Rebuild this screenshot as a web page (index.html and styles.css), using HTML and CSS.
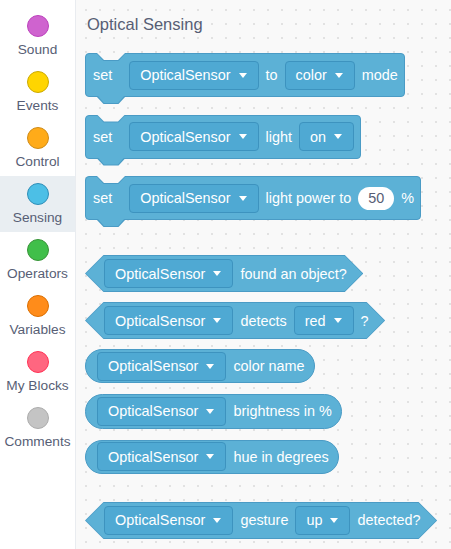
FILE: index.html
```html
<!DOCTYPE html>
<html>
<head>
<meta charset="utf-8">
<link rel="stylesheet" href="styles.css">
</head>
<body>
<div class="app">
  <nav class="sidebar">
    <div class="cat"><span class="dot sound"></span><span class="cat-label">Sound</span></div>
    <div class="cat"><span class="dot events"></span><span class="cat-label">Events</span></div>
    <div class="cat"><span class="dot control"></span><span class="cat-label">Control</span></div>
    <div class="cat active"><span class="dot sensing"></span><span class="cat-label">Sensing</span></div>
    <div class="cat"><span class="dot operators"></span><span class="cat-label">Operators</span></div>
    <div class="cat"><span class="dot variables"></span><span class="cat-label">Variables</span></div>
    <div class="cat"><span class="dot myblocks"></span><span class="cat-label">My Blocks</span></div>
    <div class="cat"><span class="dot comments"></span><span class="cat-label">Comments</span></div>
  </nav>
  <main class="workspace">
    <div class="title">Optical Sensing</div>

    <div class="stack-wrap b1">
      <div class="stack">
        <span class="lbl first">set</span>
        <span class="dd">OpticalSensor<i class="arrow"></i></span>
        <span class="lbl">to</span>
        <span class="dd">color<i class="arrow"></i></span>
        <span class="lbl">mode</span>
      </div>
    </div>

    <div class="stack-wrap b2">
      <div class="stack">
        <span class="lbl first">set</span>
        <span class="dd">OpticalSensor<i class="arrow"></i></span>
        <span class="lbl">light</span>
        <span class="dd">on<i class="arrow"></i></span>
      </div>
    </div>

    <div class="stack-wrap b3">
      <div class="stack">
        <span class="lbl first">set</span>
        <span class="dd">OpticalSensor<i class="arrow"></i></span>
        <span class="lbl">light power to</span>
        <span class="num">50</span>
        <span class="lbl">%</span>
      </div>
    </div>

    <div class="bool b4"><div class="bool-in">
      <span class="dd">OpticalSensor<i class="arrow"></i></span>
      <span class="lbl">found an object?</span>
    </div></div>

    <div class="bool b5"><div class="bool-in">
      <span class="dd">OpticalSensor<i class="arrow"></i></span>
      <span class="lbl">detects</span>
      <span class="dd">red<i class="arrow"></i></span>
      <span class="lbl">?</span>
    </div></div>

    <div class="rep b6">
      <span class="dd">OpticalSensor<i class="arrow"></i></span>
      <span class="lbl">color name</span>
    </div>

    <div class="rep b7">
      <span class="dd">OpticalSensor<i class="arrow"></i></span>
      <span class="lbl">brightness in %</span>
    </div>

    <div class="rep b8">
      <span class="dd">OpticalSensor<i class="arrow"></i></span>
      <span class="lbl">hue in degrees</span>
    </div>

    <div class="bool b9"><div class="bool-in">
      <span class="dd">OpticalSensor<i class="arrow"></i></span>
      <span class="lbl">gesture</span>
      <span class="dd">up<i class="arrow"></i></span>
      <span class="lbl">detected?</span>
    </div></div>
  </main>
</div>
</body>
</html>
```

FILE: styles.css
```css
html, body {
  margin: 0;
  padding: 0;
  width: 451px;
  height: 549px;
  overflow: hidden;
  font-family: "Liberation Sans", Arial, sans-serif;
}

.app {
  display: flex;
  width: 451px;
  height: 549px;
}

.sidebar {
  width: 75px;
  flex: none;
  background: #ffffff;
  border-right: 1px solid #e9ecf0;
  padding-top: 8px;
  box-sizing: content-box;
}

.cat {
  height: 56px;
  display: flex;
  flex-direction: column;
  align-items: center;
  padding-top: 7px;
  box-sizing: border-box;
}

.cat.active {
  background: #e9eef2;
}

.dot {
  width: 22px;
  height: 22px;
  border-radius: 50%;
  box-sizing: border-box;
  border: 1px solid rgba(0, 0, 0, 0.12);
}

.sound { background: #cf63cf; border-color: #bd42bd; }
.events { background: #ffd500; border-color: #ccaa00; }
.control { background: #ffab19; border-color: #cf8b17; }
.sensing { background: #4cbfe6; border-color: #2e8eb8; }
.operators { background: #40bf4a; border-color: #389438; }
.variables { background: #ff8c1a; border-color: #db6e00; }
.myblocks { background: #ff6680; border-color: #ff3355; }
.comments { background: #c4c4c4; border-color: #acacac; }

.cat-label {
  margin-top: 5px;
  font-size: 13.7px;
  line-height: 16px;
  color: #575e75;
  white-space: nowrap;
}

.workspace {
  flex: 1;
  background-color: #f9f9f9;
  background-image: radial-gradient(circle, #e2e2e2 0.9px, transparent 1.3px);
  background-size: 14px 14px;
  background-position: 3px 3px;
  padding: 14px 0 0 9px;
  display: flex;
  flex-direction: column;
  align-items: flex-start;
  box-sizing: border-box;
}

.title {
  font-size: 16.5px;
  line-height: 20px;
  color: #575e75;
  margin-left: 2px;
  margin-bottom: 19px;
}

/* common text */
.lbl {
  color: #ffffff;
  font-size: 14.4px;
  white-space: nowrap;
}

.dd {
  display: inline-flex;
  align-items: center;
  height: 29px;
  box-sizing: border-box;
  padding: 0 11px 0 10px;
  background: #4fa9d3;
  border: 1px solid #3d93bf;
  border-radius: 4px;
  color: #ffffff;
  font-size: 14.4px;
  white-space: nowrap;
}

.arrow {
  display: inline-block;
  width: 0;
  height: 0;
  margin-left: 8px;
  border-left: 4.5px solid transparent;
  border-right: 4.5px solid transparent;
  border-top: 5px solid #ffffff;
}

.num {
  display: inline-flex;
  align-items: center;
  justify-content: center;
  width: 36px;
  height: 23px;
  background: #ffffff;
  border-radius: 12px;
  color: #575e75;
  font-size: 14.4px;
}

/* stack blocks */
.stack-wrap {
  position: relative;
  margin-bottom: 17.5px;
}

.stack {
  position: relative;
  display: flex;
  align-items: center;
  gap: 7px;
  height: 44px;
  box-sizing: border-box;
  padding: 0 6px 0 7px;
  background: #5cb1d6;
  border: 1px solid #4a9bc5;
  border-radius: 4px;
}

.stack .first {
  margin-right: 10px;
}

/* top notch */
.stack-wrap::before,
.stack-wrap::after {
  content: "";
  position: absolute;
  clip-path: polygon(0 0, 100% 0, 75% 100%, 25% 100%);
  z-index: 2;
}

.stack-wrap::before {
  top: 0;
  left: 11px;
  width: 30px;
  height: 8px;
  background: #4a9bc5;
}

.stack-wrap::after {
  top: 0;
  left: 12px;
  width: 28px;
  height: 7px;
  background: #f9f9f9;
}

/* bottom tab */
.stack::before,
.stack::after {
  content: "";
  position: absolute;
  clip-path: polygon(0 0, 100% 0, 75% 100%, 25% 100%);
}

.stack::before {
  top: 100%;
  left: 10px;
  width: 30px;
  height: 8px;
  background: #4a9bc5;
}

.stack::after {
  top: calc(100% - 1px);
  left: 11px;
  width: 28px;
  height: 8px;
  background: #5cb1d6;
}

.b3 {
  margin-bottom: 35px;
}

/* boolean (hexagon) blocks */
.bool {
  height: 37px;
  box-sizing: border-box;
  padding: 1px;
  background: #4a9bc5;
  clip-path: polygon(18.5px 0, calc(100% - 18.5px) 0, 100% 50%, calc(100% - 18.5px) 100%, 18.5px 100%, 0 50%);
  margin-bottom: 10px;
}

.bool-in {
  display: flex;
  align-items: center;
  gap: 7px;
  height: 35px;
  padding: 0 15.5px 0 18px;
  background: #5cb1d6;
  clip-path: polygon(17.5px 0, calc(100% - 17.5px) 0, 100% 50%, calc(100% - 17.5px) 100%, 17.5px 100%, 0 50%);
}

/* reporter blocks */
.rep {
  display: flex;
  align-items: center;
  gap: 7px;
  height: 36px;
  box-sizing: border-box;
  padding: 0 9px 0 11px;
  background: #5cb1d6;
  border: 1px solid #4a9bc5;
  border-radius: 18px;
  margin-bottom: 11px;
}

.b5 {
  margin-bottom: 10px;
}

.b8 {
  margin-bottom: 28px;
}
```
